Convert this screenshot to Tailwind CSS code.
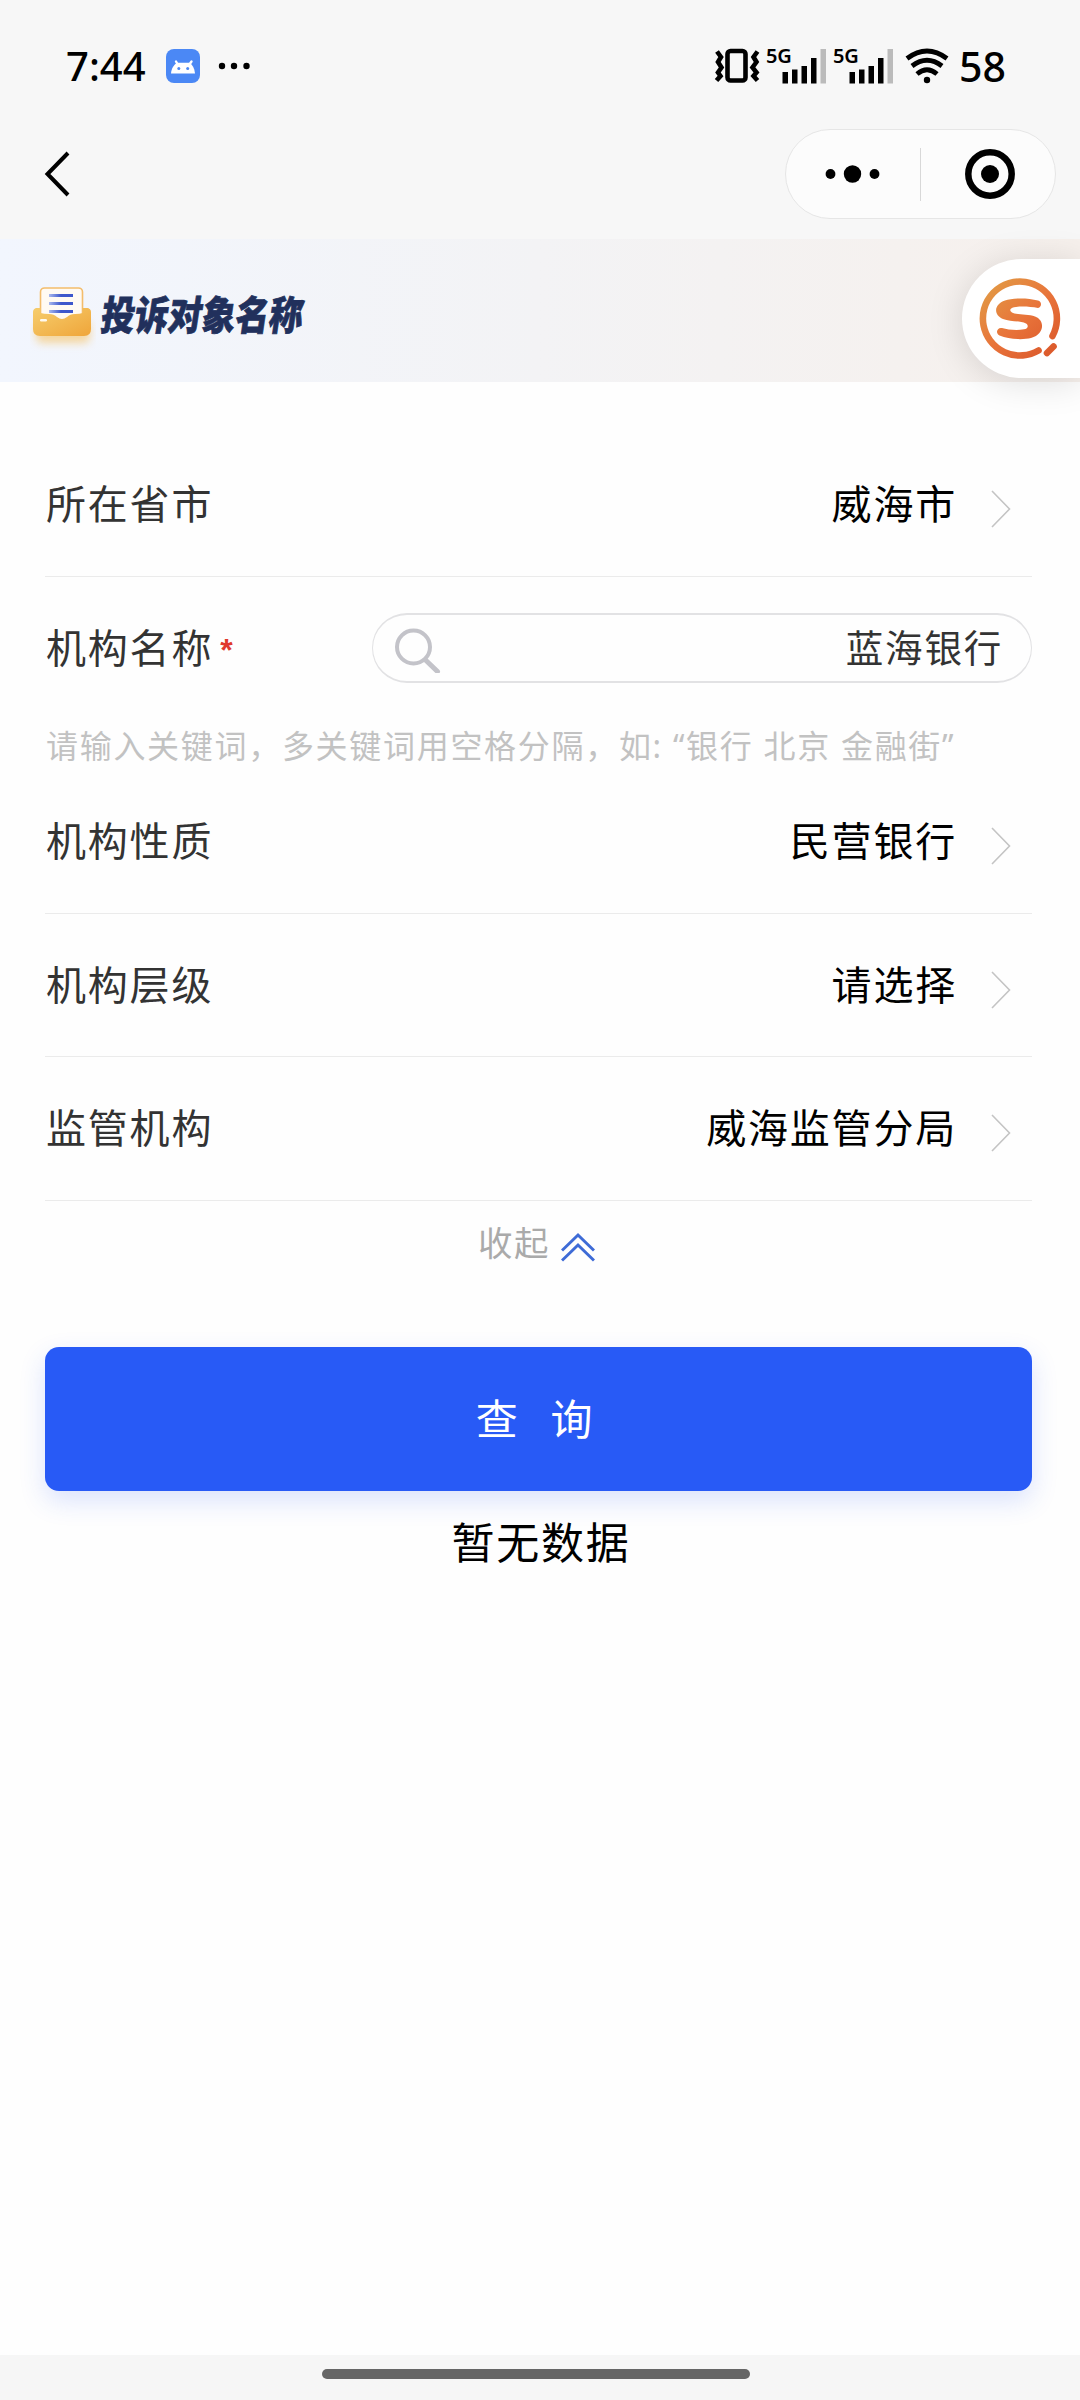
<!DOCTYPE html>
<html lang="zh-CN">
<head>
<meta charset="utf-8">
<title>投诉对象名称</title>
<script src="https://cdn.jsdelivr.net/npm/@tailwindcss/browser@4"></script>
</head>
<body class="bg-white">
<div class="flex h-[2400px] w-[1080px] flex-col overflow-hidden bg-[#fefefe] font-['Noto_Sans_CJK_SC',sans-serif] text-[40px] leading-none tracking-[1.8px] text-black">

  <!-- status bar -->
  <header class="flex h-[110px] shrink-0 items-center bg-[#f7f7f7] pt-[22px] pr-[74px] pl-[66px] font-['Noto_Sans','Noto_Sans_CJK_SC',sans-serif] tracking-normal">
    <span class="w-[100px] text-[40px] font-medium">7:44</span>
    <svg class="size-[34px]" viewBox="0 0 34 34"><rect width="34" height="34" rx="8" fill="#4b88f5"/><path d="M5 24.500C5.500 19 8 15.500 11.500 13.800H23C26.500 15.500 28.500 19 29 24.500Z" fill="#fff"/><path d="M10 12.500L12 16M25.500 12.500L23 16" stroke="#fff" stroke-width="2.400" stroke-linecap="round"/><circle cx="12.800" cy="19.500" r="1.500" fill="#4b88f5"/><circle cx="21.700" cy="19.500" r="1.500" fill="#4b88f5"/></svg>
    <svg class="ml-[18px] h-2 w-8" viewBox="0 0 32 8"><circle cx="4" cy="4" r="3.200"/><circle cx="16" cy="4" r="3.200"/><circle cx="28.500" cy="4" r="3.200"/></svg>
    <div class="ml-auto flex items-center">
      <svg class="h-[36px] w-[48px]" viewBox="0 0 48 36" fill="none" stroke="#000"><rect x="13.500" y="3" width="18" height="29.500" rx="3" stroke-width="4.600"/><path d="M3 3.500L7 9L4 14L7.500 19.500L4 24.500L6.500 28L2.500 32.500M43.500 3.500L39.500 9L42.500 14L38.500 19.500L42.500 24.500L39.500 28L43.500 32.500" stroke-width="4.600"/></svg>
      <svg class="ml-[1px] h-[60px] w-[64px]" viewBox="0 -12 64 60"><text x="3" y="15" font-family="Noto Sans" font-size="20" font-weight="600" letter-spacing="-.3">5G</text><path d="M19.500 24h5.500v11.500h-5.500zM29 21.500h5.500v14h-5.500zM38.500 18h5.500v17.500h-5.500zM48 10h5.500v25.500h-5.500z"/><path d="M57.500 1h5.500v34.500h-5.500z" fill="#bbb"/></svg>
      <svg class="ml-[3px] h-[60px] w-[68px]" viewBox="0 -12 68 60"><text x="3" y="15" font-family="Noto Sans" font-size="20" font-weight="600" letter-spacing="-.3">5G</text><path d="M19.500 24h5.500v11.500h-5.500zM29 21.500h5.500v14h-5.500zM38.500 18h5.500v17.500h-5.500zM48 10h5.500v25.500h-5.500z"/><path d="M57.500 1h5.500v34.500h-5.500z" fill="#bbb"/></svg>
      <svg class="ml-[7px] h-[36px] w-[44px]" viewBox="0 0 44 36" fill="none" stroke="#000" stroke-width="4.800"><path d="M2 10.500Q22-4.500 42 10.500M7 18Q22 6.500 37 18M12 26Q22 17.500 32 26"/><circle cx="22" cy="32" r="3.200" fill="#000" stroke="none"/></svg>
      <span class="ml-[10px] text-[41px] font-medium">58</span>
    </div>
  </header>

  <!-- navigation bar -->
  <nav class="flex h-[129px] shrink-0 items-center justify-between bg-[#f7f7f7] pr-[24px] pb-px pl-[44px]">
    <svg class="h-[46px] w-[26px]" viewBox="0 0 26 46" fill="none" stroke="#000" stroke-width="4"><path d="M24 2L3.500 23L24 44"/></svg>
    <div class="flex h-[90px] w-[271px] items-center rounded-full border border-[#e6e6e6] bg-[#fcfcfc]">
      <svg class="ml-[38px] h-5 w-[58px]" viewBox="0 0 58 20"><circle cx="6.500" cy="10" r="4.900"/><circle cx="28.500" cy="10" r="8.700"/><circle cx="50.500" cy="10" r="4.900"/></svg>
      <div class="ml-[38px] h-[53px] w-px bg-[#d8d8d8]"></div>
      <svg class="ml-[44px] size-[50px]" viewBox="0 0 50 50"><circle cx="25" cy="25" r="21.700" fill="none" stroke="#000" stroke-width="6.500"/><circle cx="25" cy="25" r="9"/></svg>
    </div>
  </nav>

  <!-- page banner -->
  <section class="relative flex h-[143px] shrink-0 items-center bg-linear-to-r from-[#f2f6fe] via-[#f3f3f5] to-[#f6f0ec] pl-[30px]">
    <svg class="mt-[17px] h-[72px] w-[66px]" viewBox="0 0 66 72">
      <defs>
        <linearGradient id="tray" x1="0" y1="0" x2="1" y2="1"><stop offset="0" stop-color="#f6cd6c"/><stop offset="1" stop-color="#efa53a"/></linearGradient>
        <linearGradient id="ink" x1="0" x2="1"><stop offset="0" stop-color="#a9b8ee"/><stop offset=".5" stop-color="#3d57cc"/></linearGradient>
        <filter id="glow" x="-30%" y="-50%" width="160%" height="250%"><feGaussianBlur stdDeviation="4"/></filter>
      </defs>
      <rect x="6" y="38" width="54" height="22" rx="6" fill="#f6c978" opacity=".7" filter="url(#glow)"/>
      <rect x="4" y="25" width="56" height="20" rx="4" fill="#eeb04c"/>
      <rect x="10.500" y="5" width="42" height="36" rx="4" fill="#fffaf3" stroke="#f3bd6c" stroke-width="1.600"/>
      <path d="M19 11h24v3H19zM19 19h24v3H19zM19 27h24v3H19z" fill="url(#ink)"/>
      <path d="M3 29Q3 25 8 25H10.500V30Q14 31 19 31Q24 31 27 34Q32 38 37 34Q40 31 45 31Q50 31 52.500 30V25H56Q61 25 61 29V46Q61 53 54 53H10Q3 53 3 46Z" fill="url(#tray)"/>
      <rect x="10" y="36" width="7" height="2.500" rx="1.200" fill="#fff" opacity=".9"/>
    </svg>
    <h1 class="mt-[5px] ml-[6px] origin-left -skew-x-10 scale-x-[0.84] text-[40px] font-black tracking-[0px] whitespace-nowrap text-[#21305c] [-webkit-text-stroke:0.8px_#21305c]">投诉对象名称</h1>
    <div class="absolute top-[20px] right-0 z-10 flex h-[119px] w-[118px] items-center rounded-l-full bg-white pl-[16px] shadow-[0_4px_36px_rgba(0,0,0,0.13)]">
      <svg class="size-[84px]" viewBox="0 0 84 84" fill="none" stroke-linecap="round">
        <defs><linearGradient id="brand" gradientUnits="userSpaceOnUse" x1="8" y1="8" x2="70" y2="76"><stop offset="0" stop-color="#e29a45"/><stop offset=".55" stop-color="#e8733a"/><stop offset="1" stop-color="#dc5b2c"/></linearGradient></defs>
        <g stroke="url(#brand)">
          <path d="M74.500 59A37 37 0 1 0 60.500 73.500" stroke-width="6.600"/>
          <path d="M69 76L75.500 69.500" stroke-width="6.600"/>
        </g>
        <path d="M60 31C64 30 64 24.500 60 23.500C49 20.500 34 21 27 23.500C16 27 15 38 25 42C32 45 42 43.500 48 46.500C51 48.500 50 51.500 46 52.300C38 54 30 52.500 24 51C19 50 17 56.500 21.500 58.500C31 62.500 45 63 53 61C67 57 67 43 57 39.500C50 37 38 38 34 35.500C31 33.500 32 31 36 30.200C43 29 52 29.500 60 31Z" fill="url(#brand)"/>
      </svg>
    </div>
  </section>

  <!-- query form -->
  <main class="flex grow flex-col pt-[51px] pr-[48px] pl-[45px]">
    <div class="flex h-[144px] shrink-0 items-center border-b border-[#ebebeb] pr-[21px] pl-px">
      <span class="pb-[5px] text-[#333]">所在省市</span>
      <span class="ml-auto pb-[5px]">威海市</span>
      <svg class="mt-[9px] ml-[34px] h-[38px] w-[20px]" viewBox="0 0 20 38" fill="none" stroke="#c4c4c4" stroke-width="1.600"><path d="M1 1L18.500 19L1 37"/></svg>
    </div>

    <div class="flex h-[142px] shrink-0 items-center pl-px">
      <span class="pb-[4px] text-[#333]">机构名称</span>
      <span class="ml-[7px] h-[28px] font-['Liberation_Sans',sans-serif] text-[32px] font-bold tracking-normal text-[#e0392b]">*</span>
      <div class="ml-auto flex h-[70px] w-[660px] items-center rounded-full border border-y-2 border-[#e2e2e4] pr-[28px] pl-[20px]">
        <svg class="size-[50px]" viewBox="0 0 50 50" fill="none" stroke="#c3c3c9"><circle cx="20.500" cy="24" r="16.500" stroke-width="4"/><path d="M32.500 37L44.500 48.500" stroke-width="5" stroke-linecap="round"/></svg>
        <span class="ml-auto pb-[4px] text-[37.500px] text-[#333]">蓝海银行</span>
      </div>
    </div>

    <p class="flex h-[51px] shrink-0 items-center pt-[2px] pl-px font-['Noto_Sans','Noto_Sans_CJK_SC',sans-serif] text-[32px] tracking-[1.700px] whitespace-pre text-[#c2c2c2]">请输入关键词，多关键词用空格分隔，如: “银行 北京 金融街”</p>

    <div class="flex h-[144px] shrink-0 items-center border-b border-[#ebebeb] pr-[21px] pl-px">
      <span class="pb-[5px] text-[#333]">机构性质</span>
      <span class="ml-auto pb-[5px]">民营银行</span>
      <svg class="mt-[9px] ml-[34px] h-[38px] w-[20px]" viewBox="0 0 20 38" fill="none" stroke="#c4c4c4" stroke-width="1.600"><path d="M1 1L18.500 19L1 37"/></svg>
    </div>
    <div class="flex h-[143px] shrink-0 items-center border-b border-[#ebebeb] pr-[21px] pl-px">
      <span class="pb-[5px] text-[#333]">机构层级</span>
      <span class="ml-auto pb-[5px]">请选择</span>
      <svg class="mt-[9px] ml-[34px] h-[38px] w-[20px]" viewBox="0 0 20 38" fill="none" stroke="#c4c4c4" stroke-width="1.600"><path d="M1 1L18.500 19L1 37"/></svg>
    </div>
    <div class="flex h-[144px] shrink-0 items-center border-b border-[#ebebeb] pr-[21px] pl-px">
      <span class="pb-[5px] text-[#333]">监管机构</span>
      <span class="ml-auto pb-[5px]">威海监管分局</span>
      <svg class="mt-[9px] ml-[34px] h-[38px] w-[20px]" viewBox="0 0 20 38" fill="none" stroke="#c4c4c4" stroke-width="1.600"><path d="M1 1L18.500 19L1 37"/></svg>
    </div>

    <div class="flex h-[84px] shrink-0 items-center justify-center pr-[4px]">
      <span class="pb-[4px] text-[34.500px] tracking-[1.500px] text-[#aaa]">收起</span>
      <svg class="mt-[7px] ml-[11px] h-[30px] w-[34px]" viewBox="0 0 34 30" fill="none" stroke="#3e6bd6" stroke-width="3"><path d="M1 18.500L17 3L33 18.500M1 28.500L17 13L33 28.500"/></svg>
    </div>

    <button class="mt-[62px] flex h-[144px] shrink-0 items-center justify-center rounded-[14px] bg-[#285af6] text-[42px] tracking-[1.800px] text-white shadow-[0_10px_26px_rgba(40,90,246,0.17)]">
      <span class="flex gap-[31px] pr-[7px] pb-[5px]"><span>查</span><span>询</span></span>
    </button>
    <p class="mt-[28px] pl-[5px] text-center text-[43px]">暂无数据</p>
  </main>

  <!-- gesture bar -->
  <footer class="flex h-[45px] shrink-0 justify-center bg-[#f6f6f6] pt-[14px] pr-[8px]">
    <div class="h-[10px] w-[428px] rounded-full bg-[#666]"></div>
  </footer>
</div>
</body>
</html>
